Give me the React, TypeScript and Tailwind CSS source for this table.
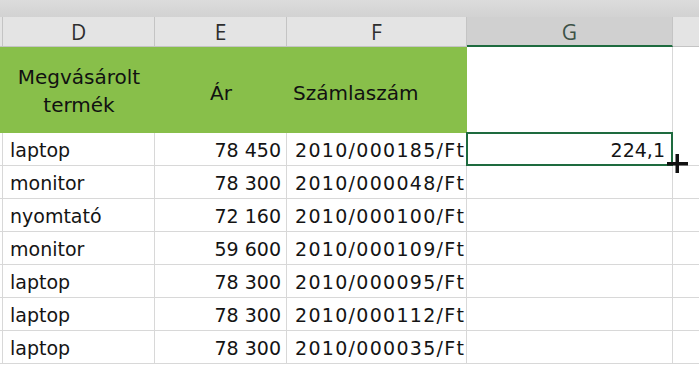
const rows = [
  ['laptop', '78 450', '2010/000185/Ft'],
  ['monitor', '78 300', '2010/000048/Ft'],
  ['nyomtató', '72 160', '2010/000100/Ft'],
  ['monitor', '59 600', '2010/000109/Ft'],
  ['laptop', '78 300', '2010/000095/Ft'],
  ['laptop', '78 300', '2010/000112/Ft'],
  ['laptop', '78 300', '2010/000035/Ft'],
]

const cols = 'grid grid-cols-[3px_152px_132px_180px_206px_26px]'

export default function App() {
  return (
    <div className="w-[699px] h-[365px] overflow-hidden bg-white font-['DejaVu_Sans',sans-serif] text-[#141414]">
      <div className="h-[17px] bg-gradient-to-b from-[#dcdcdc] to-[#d2d2d2]" />

      {/* oszlopfejlécek */}
      <div className={`${cols} h-[30px] font-['Open_Sans',sans-serif] font-medium text-[21px] text-[#2e2e2e]`}>
        <div className="bg-[#e4e4e4] border-r border-b border-[#c4c4c4]" />
        {['D', 'E', 'F'].map(l => (
          <div key={l} className="bg-[#e4e4e4] border-r border-b border-[#c4c4c4] flex items-center justify-center leading-none pt-[2px]">{l}</div>
        ))}
        <div className="bg-[#d0d0d0] border-r border-[#c4c4c4] border-b-2 border-b-[#1e6b3f] flex items-center justify-center leading-none pt-[2px] text-[#3d5247]">G</div>
        <div className="bg-[#e4e4e4] border-b border-[#c4c4c4]" />
      </div>

      {/* zöld fejléc sor */}
      <div className={`${cols} h-[86px] text-[20px] text-[#111]`}>
        <div className="bg-[#88bf4a]" />
        <div className="bg-[#88bf4a] flex flex-col items-center justify-center leading-[28px] pt-[1px]">
          <span>Megvásárolt</span>
          <span>termék</span>
        </div>
        <div className="bg-[#88bf4a] flex items-center justify-center pt-[5px]">Ár</div>
        <div className="bg-[#88bf4a] flex items-center pl-[6px] pt-[5px]">Számlaszám</div>
        <div className="border-r border-[#d8d8d8]" />
        <div />
      </div>

      {rows.map((r, i) => (
        <div key={i} className={`${cols} h-[33px] text-[19px]`}>
          <div className="border-r border-b border-[#d8d8d8]" />
          <div className="border-r border-b border-[#d8d8d8] flex items-center pl-[7px] pt-[2px]">{r[0]}</div>
          <div className="border-r border-b border-[#d8d8d8] flex items-center justify-end pr-[5px] pt-[2px]">{r[1]}</div>
          <div className="border-r border-b border-[#d8d8d8] flex items-center pl-[8px] pt-[2px] tracking-[1.3px]">{r[2]}</div>
          <div className="relative border-r border-b border-[#d8d8d8] flex items-center justify-end pr-[7px] pt-[2px]">
            {i === 0 && (
              <>
                <span>224,1</span>
                <div className="absolute -left-[1px] -top-[1px] -right-[1px] -bottom-[1px] border-2 border-[#1e6b3f]" />
                <svg className="absolute left-[200px] top-[21px]" width="21" height="19" viewBox="0 0 21 19">
                  <rect x="8.5" y="0" width="3.5" height="19" fill="#111" />
                  <rect x="0" y="8" width="21" height="3.5" fill="#111" />
                </svg>
              </>
            )}
          </div>
          <div className="border-b border-[#d8d8d8]" />
        </div>
      ))}
    </div>
  )
}
